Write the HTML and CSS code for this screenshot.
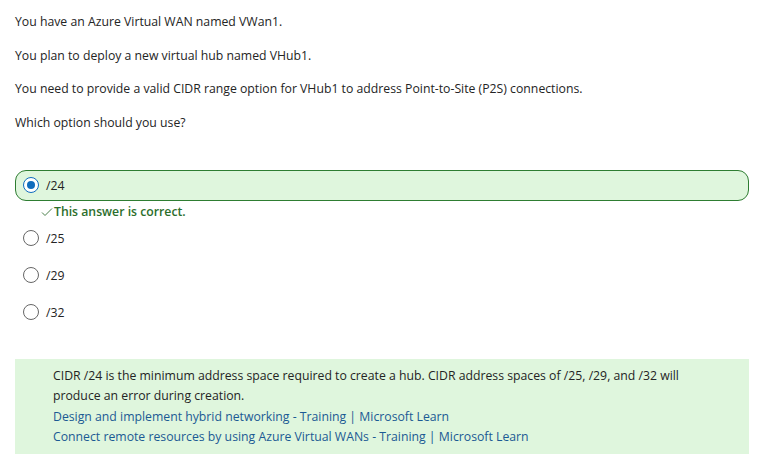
FILE: index.html
```html
<!DOCTYPE html>
<html lang="en">
<head>
<meta charset="utf-8">
<link rel="stylesheet" href="styles.css">
</head>
<body>
<div class="page">
  <div class="question">
    <p>You have an Azure Virtual WAN named VWan1.</p>
    <p>You plan to deploy a new virtual hub named VHub1.</p>
    <p>You need to provide a valid CIDR range option for VHub1 to address Point-to-Site (P2S) connections.</p>
    <p>Which option should you use?</p>
  </div>
  <div class="options">
    <div class="option selected">
      <span class="radio checked"></span><span class="label">/24</span>
    </div>
    <div class="feedback">
      <svg class="check" width="12" height="10" viewBox="0 0 12 10"><path d="M1 5.5 L4 8.5 L11 1.5" fill="none" stroke="#4a7f4a" stroke-width="1"/></svg>
      <span>This answer is correct.</span>
    </div>
    <div class="option">
      <span class="radio"></span><span class="label">/25</span>
    </div>
    <div class="option">
      <span class="radio"></span><span class="label">/29</span>
    </div>
    <div class="option">
      <span class="radio"></span><span class="label">/32</span>
    </div>
  </div>
  <div class="explanation">
    <p>CIDR /24 is the minimum address space required to create a hub. CIDR address spaces of /25, /29, and /32 will produce an error during creation.</p>
    <a href="#">Design and implement hybrid networking - Training | Microsoft Learn</a>
    <a href="#">Connect remote resources by using Azure Virtual WANs - Training | Microsoft Learn</a>
  </div>
</div>
</body>
</html>
```
FILE: styles.css
```css
* { box-sizing: border-box; }
html, body { margin: 0; padding: 0; background: #ffffff; }
body {
  font-family: "Open Sans", "Noto Sans", sans-serif;
  font-size: 12.25px;
  color: #242424;
  width: 762px;
  height: 471px;
  overflow: hidden;
}
.page { padding: 12px 13px 0 15px; }
.question p { margin: 0 0 13.5px; line-height: 20px; }
.options { margin-top: 37px; display: flex; flex-direction: column; }
.option {
  display: flex;
  align-items: center;
  height: 31px;
  padding-left: 7px;
  border: 1px solid transparent;
  border-radius: 11px;
  margin-bottom: 6px;
}
.option.selected {
  background: #dff6dd;
  border-color: #2e7d32;
  margin-bottom: 0;
}
.radio {
  width: 16px;
  height: 16px;
  border-radius: 50%;
  border: 1px solid #666666;
  background: #fff;
  flex: none;
  position: relative;
}
.radio.checked { border: 1.5px solid #0f6cbd; }
.radio.checked::after {
  content: "";
  position: absolute;
  left: 50%; top: 50%;
  width: 8px; height: 8px;
  margin: -4px 0 0 -4px;
  border-radius: 50%;
  background: #0f6cbd;
}
.label { margin-left: 7px; }
.feedback {
  display: flex;
  align-items: center;
  height: 22px;
  padding-left: 26px;
  color: #2c6e2c;
  font-weight: 600;
}
.check { margin-right: 1px; }
.explanation {
  margin-top: 25px;
  background: #dff6dd;
  padding: 7px 62px 7px 38px;
  height: 95px;
  display: flex;
  flex-direction: column;
  align-items: flex-start;
  line-height: 20.5px;
}
.explanation p { margin: 0; }
.explanation a { color: #1b5a94; text-decoration: none; }
```
